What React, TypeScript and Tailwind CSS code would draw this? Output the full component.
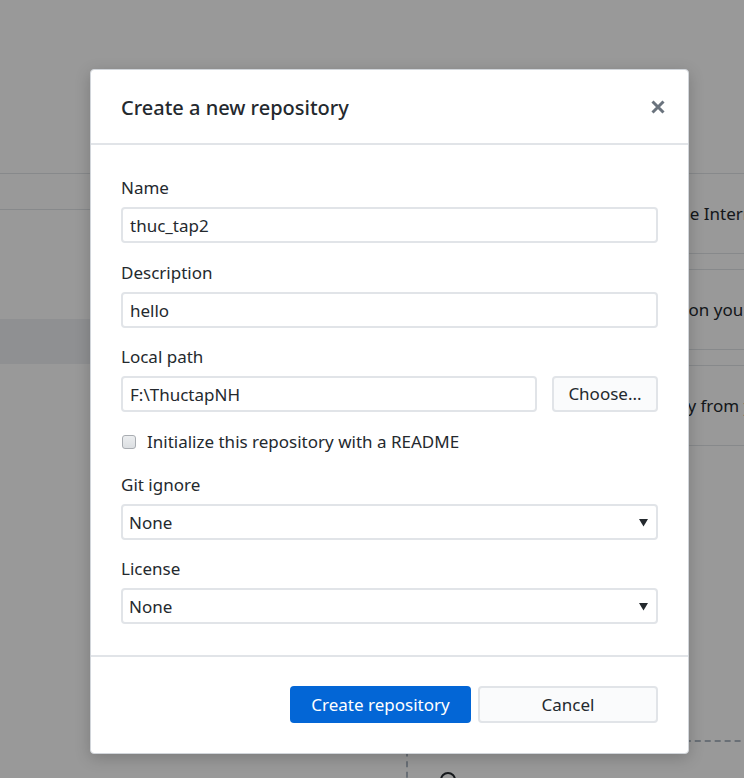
import React from "react";

function Field({ label, children }: { label: string; children: React.ReactNode }) {
  return (
    <div className="flex flex-col">
      <label className="text-[17px] leading-[22px] text-[#24292e]">{label}</label>
      <div className="mt-2">{children}</div>
    </div>
  );
}

function TextInput({ value, className = "" }: { value: string; className?: string }) {
  return (
    <div
      className={
        "h-[36px] rounded-[4px] border-2 border-[#e1e4e8] bg-white px-[7px] pt-[1px] flex items-center text-[17px] text-[#24292e] " +
        className
      }
    >
      {value}
    </div>
  );
}

function Select({ value }: { value: string }) {
  return (
    <div className="h-[36px] rounded-[4px] border-2 border-[#e1e4e8] bg-white pl-[6px] pr-[8px] pt-[1px] flex items-center justify-between text-[17px] text-[#24292e]">
      <span>{value}</span>
      <svg width="9" height="8" viewBox="0 0 9 8">
        <path d="M0 0 H9 L4.5 7.5 Z" fill="#24292e" />
      </svg>
    </div>
  );
}

export default function App() {
  return (
    <div className="relative w-[744px] h-[778px] overflow-hidden bg-white font-['Noto_Sans',sans-serif] text-[#24292e]">
      {/* background page */}
      <div className="h-[174px] border-b border-[#e1e4e8]" />
      <div className="flex">
        <div className="w-[390px] shrink-0 flex flex-col">
          <div className="h-[36px] border-b border-[#e1e4e8]" />
          <div className="h-[109px]" />
          <div className="h-[45px] bg-[#eef0f3]" />
        </div>
        <div className="flex-1 flex flex-col pl-[16px]">
          <div className="h-[80px] border-b border-[#e1e4e8] flex items-center pl-[74px] whitespace-nowrap text-[17px] text-[#24292e]">
            Clone a repository from the Internet...
          </div>
          <div className="mt-[15px] h-[81px] border-y border-[#e1e4e8] flex items-center pl-[82px] whitespace-nowrap text-[17px] text-[#24292e]">
            Create a New Repository on your hard drive...
          </div>
          <div className="mt-[15px] h-[81px] border-y border-[#e1e4e8] flex items-center pl-[77px] whitespace-nowrap text-[17px] text-[#24292e]">
            Add an Existing Repository from your hard drive...
          </div>
          <div className="mt-[294px] h-[80px] border-t-2 border-l-2 border-dashed border-[#b0bac5] pl-[32px] pt-[30px]">
            <div className="w-[16px] h-[16px] rounded-full border-2 border-[#24292e]" />
          </div>
        </div>
      </div>

      {/* overlay */}
      <div className="absolute inset-0 bg-black/40" />

      {/* modal */}
      <div className="absolute left-[90px] top-[69px] w-[599px] h-[685px] bg-white rounded-[4px] border border-[#d1d5da] shadow-[0_4px_16px_rgba(0,0,0,0.2)] flex flex-col">
        <div className="h-[75px] shrink-0 border-b-2 border-[#e1e4e8] flex items-center justify-between pl-[30px] pr-[22px]">
          <h1 className="text-[20px] font-medium text-[#24292e] leading-none pt-[3px]">Create a new repository</h1>
          <svg width="16" height="16" viewBox="0 0 16 16" className="mt-[1px]">
            <path d="M2.5 2.5 L13.5 13.5 M13.5 2.5 L2.5 13.5" stroke="#6a737d" strokeWidth="3" strokeLinecap="butt" />
          </svg>
        </div>

        <div className="flex flex-col px-[30px] pt-[32px] pb-[31px]">
          <Field label="Name">
            <TextInput value="thuc_tap2" />
          </Field>
          <div className="mt-[19px]">
            <Field label="Description">
              <TextInput value="hello" />
            </Field>
          </div>
          <div className="mt-[18px]">
            <Field label="Local path">
              <div className="flex gap-[15px]">
                <TextInput value="F:\ThuctapNH" className="flex-1" />
                <button className="w-[106px] h-[36px] rounded-[4px] border-2 border-[#e1e4e8] bg-[#fafbfc] text-[17px] text-[#24292e]">
                  Choose...
                </button>
              </div>
            </Field>
          </div>
          <div className="mt-[19px] flex items-center h-[22px]">
            <div className="ml-[1px] w-[14px] h-[14px] rounded-[3px] border border-[#a9adb2] bg-gradient-to-b from-[#eceef0] to-[#dcdfe2]" />
            <span className="ml-[11px] text-[17px] text-[#24292e]">Initialize this repository with a README</span>
          </div>
          <div className="mt-[21px]">
            <Field label="Git ignore">
              <Select value="None" />
            </Field>
          </div>
          <div className="mt-[18px]">
            <Field label="License">
              <Select value="None" />
            </Field>
          </div>
        </div>

        <div className="border-t-2 border-[#e1e4e8] flex justify-end gap-[7px] px-[30px] pt-[29px]">
          <button className="w-[181px] h-[37px] rounded-[4px] bg-[#0366d6] text-white text-[17px]">
            Create repository
          </button>
          <button className="w-[180px] h-[37px] rounded-[4px] border-2 border-[#e1e4e8] bg-[#fafbfc] text-[17px] text-[#24292e]">
            Cancel
          </button>
        </div>
      </div>
    </div>
  );
}
